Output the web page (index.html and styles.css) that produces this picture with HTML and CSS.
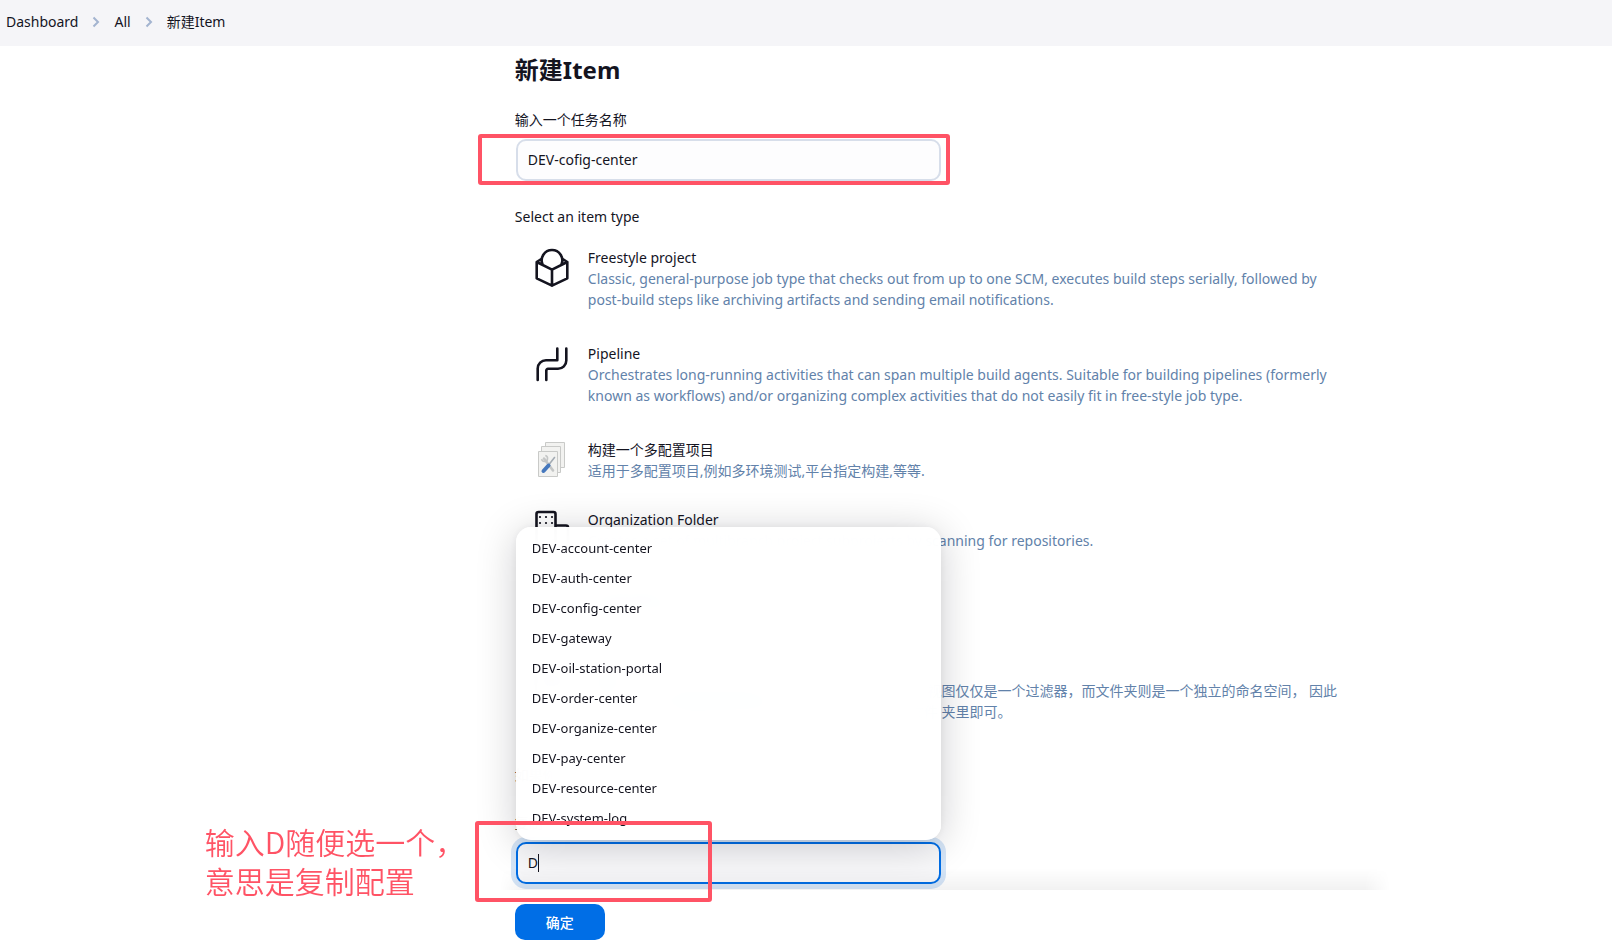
FILE: index.html
```html
<!DOCTYPE html>
<html lang="zh-CN">
<head>
<meta charset="utf-8">
<title>新建Item</title>
<link rel="stylesheet" href="styles.css">
</head>
<body>
<nav class="breadcrumbs" aria-label="Breadcrumb">
  <a href="#">Dashboard</a>
  <svg class="chevron" viewBox="0 0 8 12"><path d="M1.5 1.5 6 6l-4.500 4.500"/></svg>
  <a href="#">All</a>
  <svg class="chevron" viewBox="0 0 8 12"><path d="M1.5 1.5 6 6l-4.500 4.500"/></svg>
  <a href="#">新建Item</a>
</nav>
<form class="page">
  <main class="panel">
    <h1>新建Item</h1>
    <label class="label" for="name">输入一个任务名称</label>
    <div class="field">
      <input id="name" class="input" type="text" value="DEV-cofig-center">
      <span class="mark mark-name"></span>
    </div>
    <h2 class="label types-label">Select an item type</h2>
    <ul class="types">
      <li class="type">
        <svg class="icon line" viewBox="0 0 40 40"><path d="M20 22.700 4.700 15v16.300L20 38.700l15.300-7.400V15L20 22.700v16M10.600 17.500a10.300 10.300 0 1 1 18.800 0M4.700 15 9.300 12M35.300 15 30.700 12"/></svg>
        <div><h3>Freestyle project</h3><p>Classic, general-purpose job type that checks out from up to one SCM, executes build steps serially, followed by<br>post-build steps like archiving artifacts and sending email notifications.</p></div>
      </li>
      <li class="type">
        <svg class="icon line" viewBox="0 0 40 40"><path d="M5.700 37V25.500a8.300 8.300 0 0 1 8.300-8.300h11.300V5.500M14.300 37V27.500a1.700 1.700 0 0 1 1.700-1.700h10a8.300 8.300 0 0 0 8.300-8.300V5.500"/></svg>
        <div><h3>Pipeline</h3><p>Orchestrates long-running activities that can span multiple build agents. Suitable for building pipelines (formerly<br>known as workflows) and/or organizing complex activities that do not easily fit in free-style job type.</p></div>
      </li>
      <li class="type compact">
        <svg class="icon" viewBox="0 -1 40 40">
          <g fill="#f2f2f0" stroke="#c9cac8"><path d="M13.500 2.500h19v25h-19z"/><path d="M9.500 6.500h19v26h-19z"/><path d="M6.500 11.500h19v25h-19z"/></g>
          <path d="M12 18.500l9 12" stroke="#c4c6c6" stroke-width="2.600" stroke-linecap="round"/>
          <path d="M13.300 15.600a3 3 0 1 1-3.700 3.500" fill="none" stroke="#c3c5c5" stroke-width="1.600"/>
          <path d="M22.500 17.500l-5.500 7" stroke="#a3abb3" stroke-width="1.600" stroke-linecap="round"/>
          <path d="M16.500 25.500l-5 5.500" stroke="#4678bd" stroke-width="4" stroke-linecap="round"/>
        </svg>
        <div><h3>构建一个多配置项目</h3><p>适用于多配置项目,例如多环境测试,平台指定构建,等等.</p></div>
      </li>
      <li class="type">
        <svg class="icon line" viewBox="0 0 40 40"><path d="M4.500 38V5a2 2 0 0 1 2-2h15a2 2 0 0 1 2 2v33zM23.500 16.500H34a2 2 0 0 1 2 2V38H23.500"/><path class="dots" d="M8 8h.01M14 8h.01M20 8h.01M8 14h.01M14 14h.01M20 14h.01"/></svg>
        <div><h3>Organization Folder</h3><p>Creates a set of multibranch project subprojects by scanning for repositories.</p></div>
      </li>
      <li class="type">
        <svg class="icon line" viewBox="0 0 40 40"><path d="M5 35V23h30v12M20 23V5"/></svg>
        <div><h3>多分支流水线</h3><p>根据一个SCM仓库中检测到的分支创建一系列流水线。</p></div>
      </li>
      <li class="type">
        <svg class="icon line" viewBox="0 0 40 40"><path d="M4 8h12l4 5h16v20H4z"/></svg>
        <div><h3>文件夹</h3><p>创建一个可以嵌套存储的容器。利用它可以进行分组。 视图仅仅是一个过滤器，而文件夹则是一个独立的命名空间， 因此<br>你可以有多个相同名称的的内容，只要它们在不同的文件 夹里即可。</p></div>
      </li>
    </ul>
    <p class="copy-hint">如果你想从一个已经存在的任务中创建，可以使用这个选项</p>
    <label class="label copy-label" for="from">复制</label>
    <div class="field">
      <input id="from" class="input active" type="text" value="D">
      <span class="caret"></span>
      <ul class="menu">
        <li>DEV-account-center</li>
        <li>DEV-auth-center</li>
        <li>DEV-config-center</li>
        <li>DEV-gateway</li>
        <li>DEV-oil-station-portal</li>
        <li>DEV-order-center</li>
        <li>DEV-organize-center</li>
        <li>DEV-pay-center</li>
        <li>DEV-resource-center</li>
        <li>DEV-system-log</li>
      </ul>
      <span class="mark mark-copy"></span>
      <p class="note">输入D随便选一个，<br>意思是复制配置</p>
    </div>
  </main>
  <footer class="actions"><button class="submit" type="button">确定</button></footer>
</form>
</body>
</html>
```
FILE: styles.css
```css
* { box-sizing: border-box; }
body {
  margin: 0;
  background: #fff;
  color: #14141f;
  font: 14px/21px "Noto Sans", "Noto Sans CJK SC", sans-serif;
  overflow: hidden;
}
h1, h2, h3, p, ul { margin: 0; padding: 0; font-size: inherit; font-weight: 400; }
ul { list-style: none; }

.breadcrumbs {
  display: flex;
  align-items: center;
  height: 46px;
  padding: 0 6px 3px;
  gap: 14px;
  background: #f5f5f8;
}
.breadcrumbs a { color: inherit; text-decoration: none; }
.chevron { width: 8px; height: 12px; fill: none; stroke: #a3b4d0; stroke-width: 2; }

.page { padding-left: calc(32% - 1px); }
.panel { max-width: 860px; padding-top: 7px; }
.panel h1 { font-size: 24px; line-height: 34px; font-weight: 700; }
.label { display: block; line-height: 21px; }
.panel > .label { margin-top: 22px; }

.field { position: relative; width: 427px; padding: 0 1px; margin-top: 9px; }
.input {
  display: block;
  width: 100%;
  height: 42px;
  padding: 0 10px 2px;
  border: 2px solid #d7deea;
  border-radius: 10px;
  background: #fdfdfe;
  color: inherit;
  font: inherit;
  outline: none;
}
.input.active { border-color: #006ee6; background: #f8f8fa; box-shadow: 0 0 0 5px #d5e5f7; }

.panel > .types-label { margin-top: 25px; }
.types { margin-top: 20px; }
.type {
  display: grid;
  grid-template-columns: 40px 1fr;
  gap: 16px;
  padding-left: 17px;
  margin-bottom: 33px;
}
.type.compact { margin-bottom: 28px; }
.type p { color: #6282aa; white-space: nowrap; }
.icon { display: block; width: 40px; height: 40px; }
.line { fill: none; stroke: #14141f; stroke-width: 2.6; stroke-linecap: round; stroke-linejoin: round; }
.dots { stroke-width: 2.2; }
.copy-hint { margin-top: 42px; }
.panel > .copy-label { margin-top: 27px; }

.menu {
  position: absolute;
  left: 1px;
  right: 1px;
  bottom: calc(100% + 2px);
  padding: 6px 0 7px;
  border-radius: 15px;
  background: rgba(255, 255, 255, 0.97);
  backdrop-filter: blur(15px);
  box-shadow: 0 5px 40px rgba(0, 0, 20, 0.2), 0 0 8px rgba(0, 0, 20, 0.06);
  font-size: 13px;
}
.menu li { padding: 0 16px; line-height: 30px; }
.caret { position: absolute; left: 23px; top: 12px; width: 1px; height: 18px; background: #14141f; }

.mark { position: absolute; border: 4px solid #ff5365; border-radius: 3px; pointer-events: none; }
.mark-name { inset: -5px -8px -4px -37px; }
.mark-copy { left: -40px; top: -21px; width: 237px; height: 81px; }
.note {
  position: absolute;
  right: 100%;
  top: -20px;
  width: 310px;
  color: #ff5365;
  font: 350 30px/39px "Noto Sans CJK SC", sans-serif;
  white-space: nowrap;
}
.mark-copy, .note { z-index: 1; }

.actions { position: relative; max-width: 860px; margin-top: 6px; padding: 14px 0; background: #fff; }
.actions::before {
  content: "";
  position: absolute;
  left: -15px;
  right: -15px;
  bottom: 100%;
  height: 22px;
  background: linear-gradient(to top, rgba(0, 0, 0, 0.05), rgba(0, 0, 0, 0));
  -webkit-mask-image: linear-gradient(to right, transparent, #000 25px, #000 calc(100% - 25px), transparent);
  mask-image: linear-gradient(to right, transparent, #000 25px, #000 calc(100% - 25px), transparent);
  pointer-events: none;
}
.submit {
  width: 90px;
  height: 36px;
  border: 0;
  border-radius: 10px;
  background: #006ee6;
  color: #fff;
  font: 500 14px/21px "Noto Sans CJK SC", sans-serif;
}
```
